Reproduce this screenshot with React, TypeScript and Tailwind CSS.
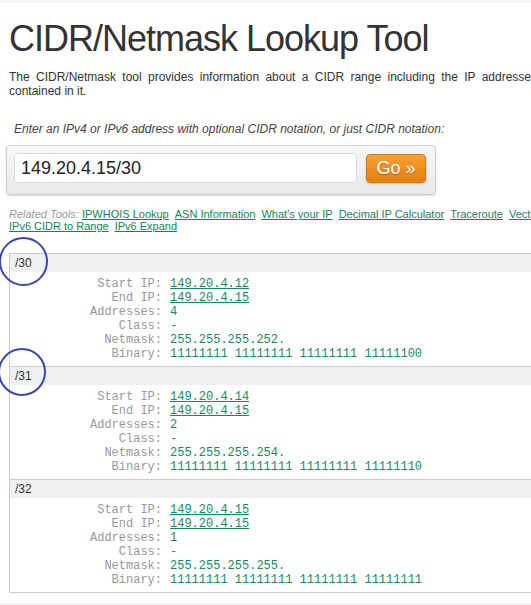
import React from "react";

type Row = { label: string; value: string; link?: boolean };
type Section = { title: string; rows: Row[] };

const sections: Section[] = [
  {
    title: "/30",
    rows: [
      { label: "Start IP:", value: "149.20.4.12", link: true },
      { label: "End IP:", value: "149.20.4.15", link: true },
      { label: "Addresses:", value: "4" },
      { label: "Class:", value: "-" },
      { label: "Netmask:", value: "255.255.255.252." },
      { label: "Binary:", value: "11111111 11111111 11111111 11111100" },
    ],
  },
  {
    title: "/31",
    rows: [
      { label: "Start IP:", value: "149.20.4.14", link: true },
      { label: "End IP:", value: "149.20.4.15", link: true },
      { label: "Addresses:", value: "2" },
      { label: "Class:", value: "-" },
      { label: "Netmask:", value: "255.255.255.254." },
      { label: "Binary:", value: "11111111 11111111 11111111 11111110" },
    ],
  },
  {
    title: "/32",
    rows: [
      { label: "Start IP:", value: "149.20.4.15", link: true },
      { label: "End IP:", value: "149.20.4.15", link: true },
      { label: "Addresses:", value: "1" },
      { label: "Class:", value: "-" },
      { label: "Netmask:", value: "255.255.255.255." },
      { label: "Binary:", value: "11111111 11111111 11111111 11111111" },
    ],
  },
];

const line1 = ["IPWHOIS Lookup", "ASN Information", "What's your IP", "Decimal IP Calculator", "Traceroute", "Vectors"];
const line2 = ["IPv6 CIDR to Range", "IPv6 Expand"];

export default function App() {
  return (
    <div className="relative w-[531px] h-[605px] overflow-hidden bg-white font-['Liberation_Sans',Arial,sans-serif] text-[#333]">
      <div className="h-[3px] bg-[#f5f5f5]" />
      <div className="pl-[9px] w-[543px]">
        <h1 className="mt-[15px] text-[36px] leading-[42px] tracking-[-1px] text-[#333] whitespace-nowrap">
          CIDR/Netmask Lookup Tool
        </h1>
        <p className="mt-[10px] w-[528px] text-[12px] leading-[14px] text-justify text-[#333]">
          The CIDR/Netmask tool provides information about a CIDR range including the IP addresses contained in it.
        </p>
        <div className="mt-[24px] pl-[5px] text-[12px] leading-[14px] italic text-[#444] whitespace-nowrap">
          Enter an IPv4 or IPv6 address with optional CIDR notation, or just CIDR notation:
        </div>
        <div className="mt-[9px] ml-[-3px] w-[430px] h-[50px] rounded-[4px] border border-[#cfcfcf] bg-gradient-to-b from-[#f7f7f7] to-[#e9e9e9] shadow-[0_1px_2px_rgba(0,0,0,0.15)] flex items-start pl-[7px] pt-[7px]">
          <div className="w-[343px] h-[30px] rounded-[4px] border border-[#dcdcdc] bg-white pl-[6px] flex items-center text-[18px] text-[#222]">
            149.20.4.15/30
          </div>
          <div className="ml-[9px] mt-[1px] w-[60px] h-[29px] rounded-[4px] border border-[#d27a12] bg-gradient-to-b from-[#f7a233] to-[#e47f08] shadow-[0_1px_2px_rgba(0,0,0,0.2)] flex items-center justify-center text-[18px] text-white [text-shadow:0_1px_1px_rgba(0,0,0,0.25)]">
            Go »
          </div>
        </div>
        <div className="mt-[13px] text-[11px] leading-[12px]">
          <div className="flex whitespace-nowrap">
            <span className="italic text-[#999] mr-[3px]">Related Tools:</span>
            {line1.map((t) => (
              <span key={t} className="mr-[6px] text-[#138659] underline">{t}</span>
            ))}
          </div>
          <div className="flex whitespace-nowrap">
            {line2.map((t) => (
              <span key={t} className="mr-[6px] text-[#138659] underline">{t}</span>
            ))}
          </div>
        </div>
        <div className="mt-[21px] w-[534px] border-l border-b border-[#ccc]">
          {sections.map((s) => (
            <div key={s.title}>
              <div className="h-[19px] border-t border-[#ccc] bg-[#f0f0f0] pl-[5px] text-[12px] leading-[18px] text-[#333]">
                {s.title}
              </div>
              <div className="pt-[5px] pb-[5px] font-['Liberation_Mono','Courier_New',monospace] text-[12px] leading-[14px]">
                {s.rows.map((r) => (
                  <div key={r.label} className="flex whitespace-pre">
                    <div className="w-[152px] text-right text-[#999]">{r.label}</div>
                    <div className={"ml-[8px] text-[#178a5e]" + (r.link ? " underline" : "")}>{r.value}</div>
                  </div>
                ))}
              </div>
            </div>
          ))}
        </div>
      </div>
      <div className="absolute left-0 right-0 bottom-0 h-[2px] bg-[#f5f5f5]" />
      <div className="absolute left-[-1px] top-[237px] w-[49px] h-[49px] rounded-full border-2 border-[#3c46b2]" />
      <div className="absolute left-[-2px] top-[348px] w-[48px] h-[48px] rounded-full border-2 border-[#3c46b2]" />
    </div>
  );
}
